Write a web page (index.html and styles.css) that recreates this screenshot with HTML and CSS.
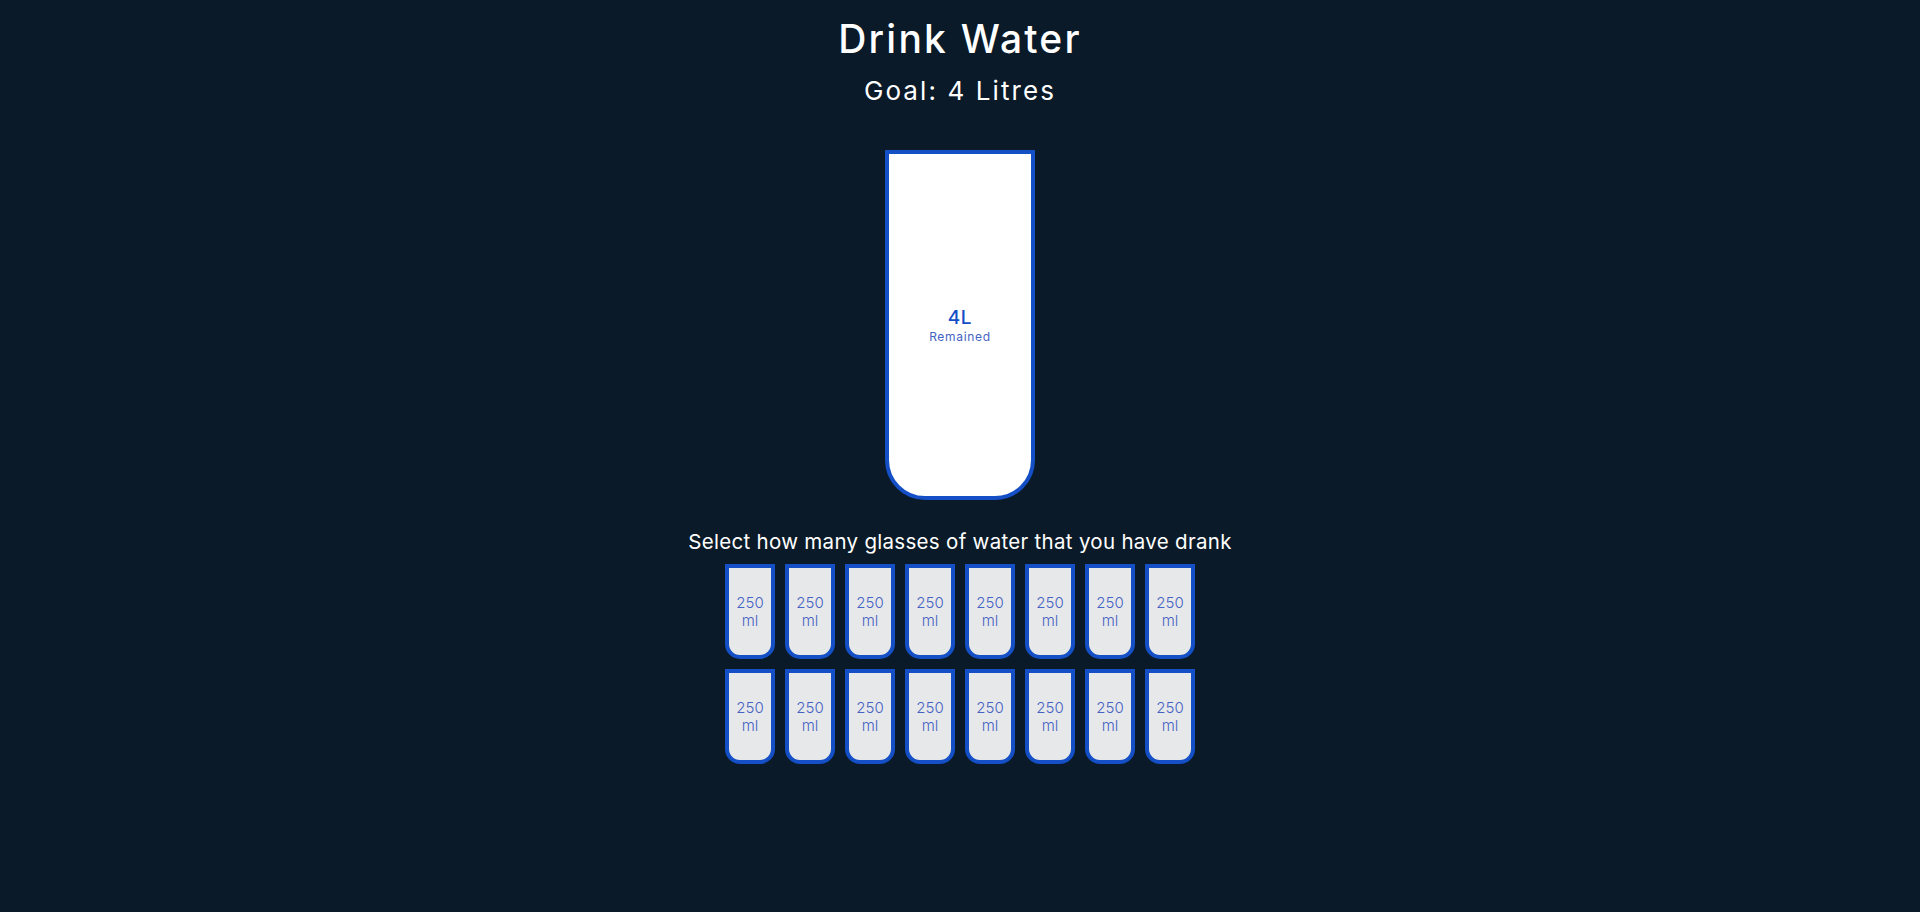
FILE: index.html
```html
<!DOCTYPE html>
<html lang="en">
<head>
<meta charset="UTF-8">
<title>Drink Water</title>
<link rel="stylesheet" href="styles.css">
</head>
<body>
  <h1 class="title">Drink Water</h1>
  <h3 class="goal">Goal: 4 Litres</h3>
  <div class="cup">
    <div class="remained">
      <span class="liters">4L</span>
      <small class="label">Remained</small>
    </div>
  </div>
  <p class="text">Select how many glasses of water that you have drank</p>
  <div class="cups">
    <div class="cup-small">250<br>ml</div>
    <div class="cup-small">250<br>ml</div>
    <div class="cup-small">250<br>ml</div>
    <div class="cup-small">250<br>ml</div>
    <div class="cup-small">250<br>ml</div>
    <div class="cup-small">250<br>ml</div>
    <div class="cup-small">250<br>ml</div>
    <div class="cup-small">250<br>ml</div>
    <div class="cup-small">250<br>ml</div>
    <div class="cup-small">250<br>ml</div>
    <div class="cup-small">250<br>ml</div>
    <div class="cup-small">250<br>ml</div>
    <div class="cup-small">250<br>ml</div>
    <div class="cup-small">250<br>ml</div>
    <div class="cup-small">250<br>ml</div>
    <div class="cup-small">250<br>ml</div>
  </div>
</body>
</html>
```
FILE: styles.css
```css
* { box-sizing: border-box; }
html, body { height: 100%; }
body {
  margin: 0;
  background-color: #0a1a28;
  color: #fff;
  font-family: "Inter", "Open Sans", sans-serif;
  display: flex;
  flex-direction: column;
  align-items: center;
}
.title {
  font-size: 39px;
  line-height: 46px;
  font-weight: 500;
  letter-spacing: 2.2px;
  margin: 16px 0 0;
}
.goal {
  font-size: 26px;
  line-height: 30px;
  font-weight: 400;
  letter-spacing: 2.1px;
  margin: 14px 0 0;
}
.cup {
  background-color: #fff;
  border: 4px solid #144fc6;
  color: #144fc6;
  border-radius: 0 0 40px 40px;
  width: 150px;
  height: 350px;
  margin: 44px 0 0;
  display: flex;
  flex-direction: column;
  overflow: hidden;
}
.remained {
  flex: 1;
  display: flex;
  flex-direction: column;
  align-items: center;
  justify-content: center;
  text-align: center;
  padding-top: 3px;
}
.liters {
  font-size: 19px;
  line-height: 21px;
  font-weight: 500;
  letter-spacing: 0.6px;
}
.label {
  font-size: 12px;
  line-height: 18px;
  font-weight: 400;
  letter-spacing: 0.7px;
  color: #4463c4;
}
.text {
  font-size: 20.5px;
  line-height: 24px;
  letter-spacing: 0.3px;
  margin: 29.5px 0 0;
}
.cups {
  display: flex;
  flex-wrap: wrap;
  justify-content: center;
  width: 480px;
  margin-top: 5.5px;
}
.cup-small {
  width: 50px;
  height: 95px;
  margin: 5px;
  border: 4px solid #144fc6;
  border-radius: 0 0 15px 15px;
  background-color: rgba(255, 255, 255, 0.9);
  color: #4463c4;
  font-size: 15px;
  line-height: 18px;
  font-weight: 300;
  display: flex;
  align-items: center;
  justify-content: center;
  text-align: center;
  cursor: pointer;
}
```
